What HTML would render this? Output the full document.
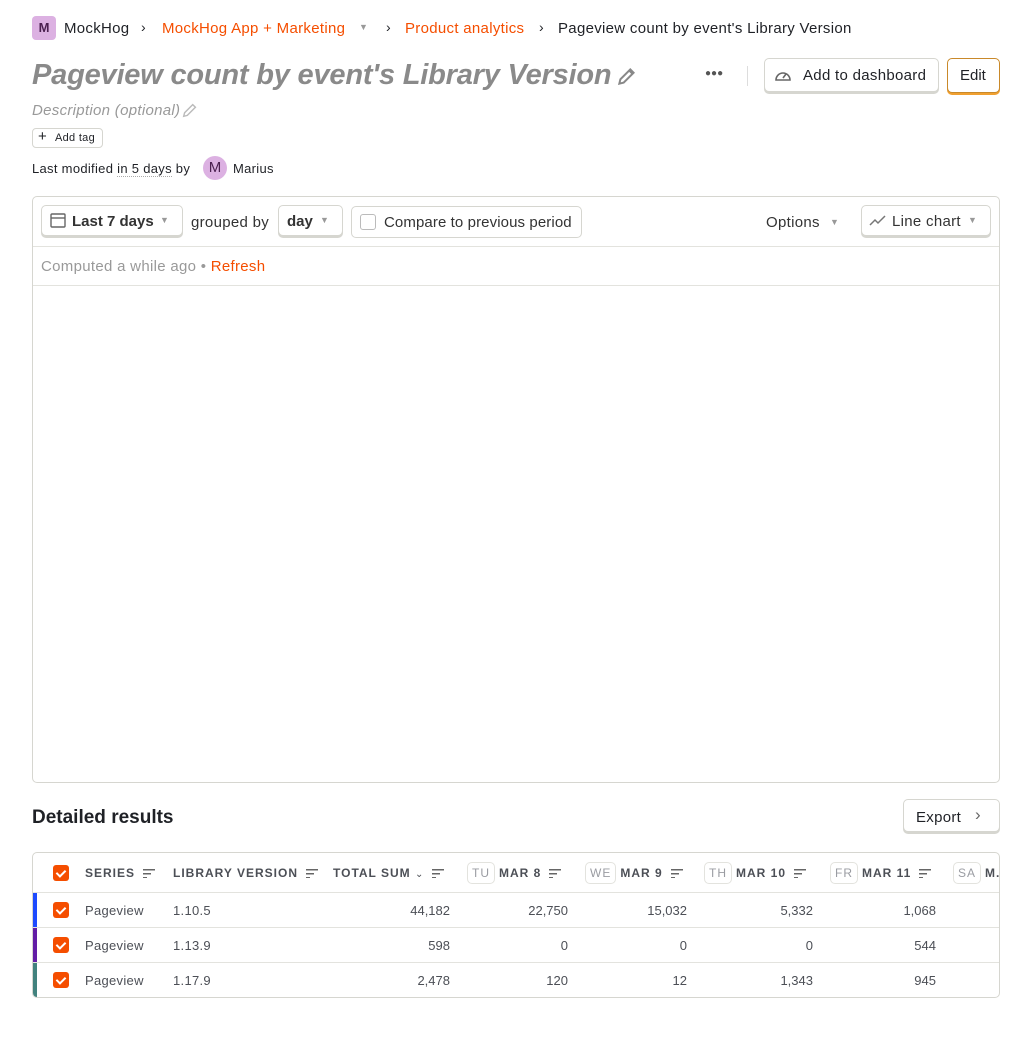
<!DOCTYPE html>
<html><head><meta charset="utf-8"><style>
*{box-sizing:border-box;margin:0;padding:0}
body{width:1032px;height:1063px;background:#fff;font-family:"Liberation Sans",sans-serif;color:#1f2126;position:relative;overflow:hidden;font-size:14px}
.a{position:absolute;white-space:nowrap}
.t{margin-top:1px}
.or{color:#f54e00}
.btn{position:absolute;border:1px solid #d6d6d0;border-radius:5px;background:#fff;box-shadow:0 2px 0 #d6d6d0}
.hd{font-size:12px;font-weight:bold;letter-spacing:1px;color:#4c4f56}
.num{position:absolute;text-align:right;font-size:13px;color:#4c4f56;margin-top:1px}
.cb{position:absolute;width:16px;height:16px;background:#f54e00;border-radius:3px}
.cb:after{content:"";position:absolute;left:5px;top:3px;width:4px;height:7px;border:solid #fff;border-width:0 2px 2px 0;transform:rotate(45deg)}
.day{display:inline-block;border:1px solid #e3e3de;border-radius:5px;padding:3px 4px;color:#9a9ca2;font-weight:normal;margin-right:4px}
.sort{display:inline-block;width:12px;height:9px;vertical-align:middle;margin-left:8px;background:linear-gradient(#666,#666) 0 0/12px 1.5px no-repeat,linear-gradient(#666,#666) 0 4px/8px 1.5px no-repeat,linear-gradient(#666,#666) 0 8px/4px 1.5px no-repeat}
.sp{letter-spacing:0.3px}
</style></head><body>
<div class="a" style="left:32px;top:16px;width:24px;height:24px;background:#dcb1e2;border-radius:4px;font-weight:bold;font-size:13px;text-align:center;line-height:24px;color:#4b2050">M</div>
<div class="a sp" style="left:64px;top:20px;font-size:15px">MockHog</div>
<div class="a" style="left:141px;top:19px;font-size:14px">›</div>
<div class="a or sp" style="left:162px;top:20px;font-size:15px">MockHog App + Marketing</div>
<div class="a" style="left:359px;top:22px;font-size:9px;color:#999">▼</div>
<div class="a" style="left:386px;top:19px">›</div>
<div class="a or sp" style="left:405px;top:20px;font-size:15px">Product analytics</div>
<div class="a" style="left:539px;top:19px">›</div>
<div class="a sp" style="left:558px;top:20px;font-size:15px">Pageview count by event's Library Version</div>

<div class="a" style="left:32px;top:59px;font-size:29px;font-weight:bold;font-style:italic;color:#8a8a8a;letter-spacing:-0.2px">Pageview count by event's Library Version</div>
<svg class="a" style="left:616px;top:65px" width="22" height="22" viewBox="0 0 20 20"><path d="M3 17l1-4L13 4l3 3-9 9z M12 5l3 3" fill="none" stroke="#888" stroke-width="1.8"/></svg>
<div class="a" style="left:705px;top:68px;font-size:10px;color:#555;letter-spacing:0px">●●●</div>
<div class="a" style="left:747px;top:66px;width:1px;height:20px;background:#ddd"></div>
<div class="btn" style="left:764px;top:58px;width:175px;height:34px"></div>
<svg class="a" style="left:773px;top:66px" width="20" height="18" viewBox="0 0 20 18"><path d="M3 14a7 7 0 1 1 14 0z M10 12l3-4" fill="none" stroke="#666" stroke-width="1.6"/></svg>
<div class="a sp" style="left:803px;top:67px;font-size:15px">Add to dashboard</div>
<div class="btn" style="left:947px;top:58px;width:53px;height:35px;border-color:#c9892a;box-shadow:0 2px 0 #f0a030"></div>
<div class="a" style="left:960px;top:67px;font-size:15px">Edit</div>

<div class="a sp" style="left:32px;top:102px;font-size:15px;font-style:italic;color:#999">Description (optional)</div>
<svg class="a" style="left:181px;top:101px" width="18" height="18" viewBox="0 0 20 20"><path d="M3 17l1-4L13 4l3 3-9 9z" fill="none" stroke="#bbb" stroke-width="1.6"/></svg>
<div class="a" style="left:32px;top:128px;width:71px;height:20px;border:1px solid #d6d6d0;border-radius:4px"></div>
<div class="a" style="left:38px;top:128px;font-size:15px">+</div>
<div class="a sp" style="left:55px;top:132px;font-size:11px">Add tag</div>
<div class="a sp" style="left:32px;top:161px;font-size:13px">Last modified <span style="border-bottom:1px dotted #aaa">in 5 days</span> by</div>
<div class="a" style="left:203px;top:156px;width:24px;height:24px;border-radius:50%;background:#dcb1e2;text-align:center;line-height:24px;font-size:15px;color:#4b2050">M</div>
<div class="a sp" style="left:233px;top:161px;font-size:13px">Marius</div>

<div class="a" style="left:32px;top:196px;width:968px;height:587px;border:1px solid #d6d6d0;border-radius:5px"></div>
<div class="a" style="left:33px;top:246px;width:966px;height:1px;background:#e3e3de"></div>
<div class="a" style="left:33px;top:285px;width:966px;height:1px;background:#e3e3de"></div>
<div class="btn" style="left:41px;top:205px;width:142px;height:31px"></div>
<svg class="a" style="left:49px;top:211px" width="18" height="18" viewBox="0 0 18 18"><rect x="2" y="3" width="14" height="13" rx="1" fill="none" stroke="#666" stroke-width="1.4"/><path d="M2 7h14" stroke="#666" stroke-width="1.4"/></svg>
<div class="a" style="left:72px;top:213px;font-size:15px;font-weight:bold;color:#333">Last 7 days</div>
<div class="a" style="left:160px;top:215px;font-size:9px;color:#999">▼</div>
<div class="a sp" style="left:191px;top:214px;font-size:15px;color:#333">grouped by</div>
<div class="btn" style="left:278px;top:205px;width:65px;height:31px"></div>
<div class="a" style="left:287px;top:213px;font-size:15px;font-weight:bold;color:#333">day</div>
<div class="a" style="left:320px;top:215px;font-size:9px;color:#999">▼</div>
<div class="a" style="left:351px;top:206px;width:231px;height:32px;border:1px solid #d6d6d0;border-radius:5px"></div>
<div class="a" style="left:360px;top:214px;width:16px;height:16px;border:1px solid #bbb;border-radius:3px"></div>
<div class="a" style="left:384px;top:214px;font-size:15px;color:#333;letter-spacing:0.1px">Compare to previous period</div>
<div class="a sp" style="left:766px;top:214px;font-size:15px;color:#333">Options</div>
<div class="a" style="left:830px;top:217px;font-size:9px;color:#999">▼</div>
<div class="btn" style="left:861px;top:205px;width:130px;height:31px"></div>
<svg class="a" style="left:869px;top:212px" width="18" height="16" viewBox="0 0 18 16"><path d="M1 13l5-5 3 3 7-7" fill="none" stroke="#777" stroke-width="1.5"/></svg>
<div class="a sp" style="left:892px;top:213px;font-size:15px;color:#333">Line chart</div>
<div class="a" style="left:968px;top:215px;font-size:9px;color:#999">▼</div>
<div class="a sp" style="left:41px;top:258px;font-size:15px;color:#999">Computed a while ago • <span class="or">Refresh</span></div>

<div class="a" style="left:32px;top:807px;font-size:19px;font-weight:bold">Detailed results</div>
<div class="btn" style="left:903px;top:799px;width:97px;height:33px"></div>
<div class="a sp" style="left:916px;top:809px;font-size:15px">Export</div>
<div class="a" style="left:975px;top:805px;font-size:17px;color:#666">›</div>

<div class="a" style="left:32px;top:852px;width:968px;height:146px;border:1px solid #d6d6d0;border-radius:5px;overflow:hidden">
 <div class="a" style="left:0;top:39px;width:968px;height:1px;background:#e3e3de"></div>
 <div class="a" style="left:0;top:74px;width:968px;height:1px;background:#e3e3de"></div>
 <div class="a" style="left:0;top:109px;width:968px;height:1px;background:#e3e3de"></div>
 <div class="a" style="left:0;top:40px;width:4px;height:34px;background:#1d4aff"></div>
 <div class="a" style="left:0;top:75px;width:4px;height:34px;background:#621da6"></div>
 <div class="a" style="left:0;top:110px;width:4px;height:34px;background:#42827e"></div>
</div>
<div class="cb" style="left:53px;top:865px"></div>
<div class="cb" style="left:53px;top:902px"></div>
<div class="cb" style="left:53px;top:937px"></div>
<div class="cb" style="left:53px;top:972px"></div>
<div class="a hd" style="left:85px;top:866px">SERIES<span class="sort"></span></div>
<div class="a hd" style="left:173px;top:866px">LIBRARY VERSION<span class="sort"></span></div>
<div class="a hd" style="left:333px;top:866px">TOTAL SUM <span style="font-weight:normal;font-size:10px">⌄</span><span class="sort"></span></div>
<div class="a hd" style="left:467px;top:862px"><span class="day">TU</span>MAR 8<span class="sort"></span></div>
<div class="a hd" style="left:585px;top:862px"><span class="day">WE</span>MAR 9<span class="sort"></span></div>
<div class="a hd" style="left:704px;top:862px"><span class="day">TH</span>MAR 10<span class="sort"></span></div>
<div class="a hd" style="left:830px;top:862px"><span class="day">FR</span>MAR 11<span class="sort"></span></div>
<div class="a hd" style="left:953px;top:862px"><span class="day">SA</span>M.</div>

<div class="a sp" style="left:85px;top:903px;font-size:13px;color:#4c4f56">Pageview</div>
<div class="a sp" style="left:85px;top:938px;font-size:13px;color:#4c4f56">Pageview</div>
<div class="a sp" style="left:85px;top:973px;font-size:13px;color:#4c4f56">Pageview</div>
<div class="a sp" style="left:173px;top:903px;font-size:13px;color:#4c4f56">1.10.5</div>
<div class="a sp" style="left:173px;top:938px;font-size:13px;color:#4c4f56">1.13.9</div>
<div class="a sp" style="left:173px;top:973px;font-size:13px;color:#4c4f56">1.17.9</div>

<div class="num" style="left:350px;width:100px;top:902px">44,182</div>
<div class="num" style="left:350px;width:100px;top:937px">598</div>
<div class="num" style="left:350px;width:100px;top:972px">2,478</div>
<div class="num" style="left:468px;width:100px;top:902px">22,750</div>
<div class="num" style="left:468px;width:100px;top:937px">0</div>
<div class="num" style="left:468px;width:100px;top:972px">120</div>
<div class="num" style="left:587px;width:100px;top:902px">15,032</div>
<div class="num" style="left:587px;width:100px;top:937px">0</div>
<div class="num" style="left:587px;width:100px;top:972px">12</div>
<div class="num" style="left:713px;width:100px;top:902px">5,332</div>
<div class="num" style="left:713px;width:100px;top:937px">0</div>
<div class="num" style="left:713px;width:100px;top:972px">1,343</div>
<div class="num" style="left:836px;width:100px;top:902px">1,068</div>
<div class="num" style="left:836px;width:100px;top:937px">544</div>
<div class="num" style="left:836px;width:100px;top:972px">945</div>
</body></html>
